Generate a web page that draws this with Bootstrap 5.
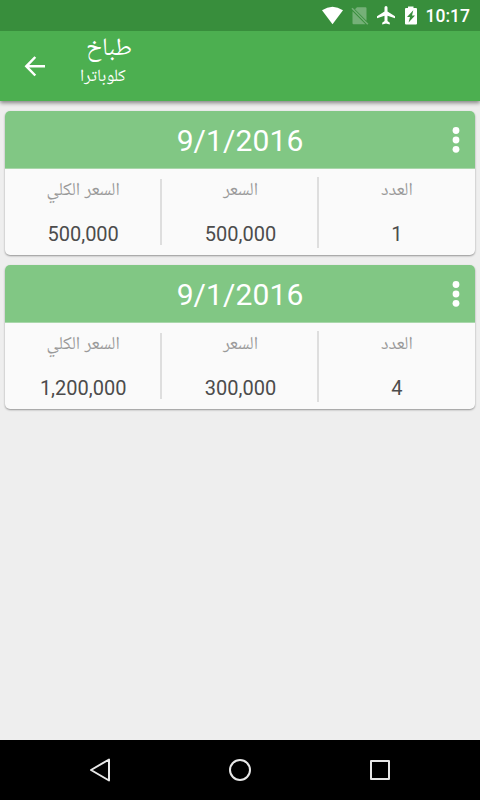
<!DOCTYPE html>
<html lang="ar">
<head>
<meta charset="utf-8">
<meta name="viewport" content="width=device-width, initial-scale=1">
<title>طباخ</title>
<link rel="stylesheet" href="https://cdn.jsdelivr.net/npm/bootstrap@5.3.0/dist/css/bootstrap.min.css">
<style>
body { font-family: Roboto, "Noto Naskh Arabic", "Noto Sans Arabic", "DejaVu Sans", sans-serif; background: #eee; height: 800px; }
svg { display: block; flex: none; }
.status-bar { height: 31px; background: #388e3c; padding-right: 10px; z-index: 1; }
.status-icons { height: 32px; }
.clock { font-size: 17.5px; font-weight: 500; line-height: 32px; margin-left: 7px; }
.app-bar { height: 70px; background: #4caf50; box-shadow: 0 2px 4px rgba(0,0,0,.45); }
.back { padding-left: 23px; width: 80px; }
.app-title { font-size: 25px; line-height: 31px; padding-left: 6px; }
.app-sub { font-size: 17.3px; line-height: 26px; }
.orders { padding: 10px 5px; gap: 10px; }
.order { height: 144px; border-radius: 5px; background: #fafafa; box-shadow: 0 1px 2px rgba(0,0,0,.38); }
.order-head { height: 58px; background: #81c784; border-bottom: 1px solid #a9d7ab; }
.order-date { font-size: 30px; line-height: 58px; padding-top: 1px; letter-spacing: .1px; }
.order-menu { right: 13px; top: 14px; }
.cell { height: 86px; }
.cell-label { font-size: 18.2px; line-height: 24px; color: #999; padding-top: 8px; height: 47px; }
.cell-value { font-size: 20px; line-height: 36px; color: #4c4c4c; }
.rule { width: 2px; background: #dedede; flex: none; }
.rule-a { height: 66px; margin-top: 10px; margin-left: -1px; }
.rule-b { height: 71px; margin-top: 8px; margin-left: -2px; }
.nav-keys { height: 60px; padding: 0 88px; }
</style>
<script src="https://cdn.jsdelivr.net/npm/bootstrap@5.3.0/dist/js/bootstrap.bundle.min.js"></script>
</head>
<body class="d-flex flex-column overflow-hidden m-0">
<header class="text-white">
  <div class="status-bar position-relative d-flex justify-content-end">
    <svg class="status-icons" width="98" height="32" viewBox="0 0 98 32">
      <path fill="#fff" d="M1 10.200Q11.500 3.200 22 10.200L11.500 24.200Z"/>
      <path fill="#75b078" d="M36 7.200H44.500Q45.500 7.200 45.500 8.200V20.800L34 9.300ZM31.500 11.200L44.500 24.200H32.500Q31.500 24.200 31.500 23.200Z"/>
      <path stroke="#75b078" stroke-width="1.600" d="M31 8.300L46.800 24.300"/>
      <path fill="#fff" d="M74 18.200V16.200L66.500 11.400V7.600A1.500 1.500 0 0 0 63.500 7.600V11.400L56 16.200V18.200L63.500 15.800V21.100L61.200 22.700V24.500L65 23.500L68.800 24.500V22.700L66.500 21.100V15.800Z"/>
      <path fill="#fff" d="M87 6.400H92.500V8H95Q96 8 96 9V23.500Q96 24.500 95 24.500H85Q84 24.500 84 23.500V9Q84 8 85 8H87Z"/>
      <path fill="#388e3c" d="M92.300 10.200L86 17H89L87.600 22.500L94 15.500H91Z"/>
    </svg>
    <span class="clock">10:17</span>
  </div>
  <div class="app-bar d-flex">
    <div class="back d-flex align-items-center">
      <svg width="24" height="24" viewBox="0 0 24 24" fill="none" stroke="#fff" stroke-width="2.500"><path d="M22 12.300H3.500M12.300 3L3.300 12.300L12.300 21.500"/></svg>
    </div>
    <div>
      <div class="app-title"><bdi>طباخ</bdi></div>
      <div class="app-sub"><bdi>كلوباترا</bdi></div>
    </div>
  </div>
</header>
<main class="orders d-flex flex-column flex-grow-1">
  <section class="order overflow-hidden">
    <div class="order-head position-relative text-center text-white">
      <div class="order-date">9/1/2016</div>
      <svg class="order-menu position-absolute" width="12" height="30" viewBox="0 0 12 30" fill="#fff"><circle cx="6" cy="5.500" r="3.400"/><circle cx="6" cy="15" r="3.400"/><circle cx="6" cy="24.300" r="3.400"/></svg>
    </div>
    <div class="d-flex text-center">
      <div class="cell col"><div class="cell-label">السعر الكلي</div><div class="cell-value">500,000</div></div>
      <div class="rule rule-a"></div>
      <div class="cell col"><div class="cell-label">السعر</div><div class="cell-value">500,000</div></div>
      <div class="rule rule-b"></div>
      <div class="cell col"><div class="cell-label">العدد</div><div class="cell-value">1</div></div>
    </div>
  </section>
  <section class="order overflow-hidden">
    <div class="order-head position-relative text-center text-white">
      <div class="order-date">9/1/2016</div>
      <svg class="order-menu position-absolute" width="12" height="30" viewBox="0 0 12 30" fill="#fff"><circle cx="6" cy="5.500" r="3.400"/><circle cx="6" cy="15" r="3.400"/><circle cx="6" cy="24.300" r="3.400"/></svg>
    </div>
    <div class="d-flex text-center">
      <div class="cell col"><div class="cell-label">السعر الكلي</div><div class="cell-value">1,200,000</div></div>
      <div class="rule rule-a"></div>
      <div class="cell col"><div class="cell-label">السعر</div><div class="cell-value">300,000</div></div>
      <div class="rule rule-b"></div>
      <div class="cell col"><div class="cell-label">العدد</div><div class="cell-value">4</div></div>
    </div>
  </section>
</main>
<footer class="nav-keys bg-black d-flex align-items-center justify-content-between">
  <svg width="24" height="24" viewBox="0 0 24 24" fill="none" stroke="#e8e8e8" stroke-width="2" stroke-linejoin="round"><path d="M21 1.500V22.500L3 12Z"/></svg>
  <svg width="24" height="24" viewBox="0 0 24 24" fill="none" stroke="#e8e8e8" stroke-width="2"><circle cx="12" cy="12" r="10"/></svg>
  <svg width="24" height="24" viewBox="0 0 24 24" fill="none" stroke="#e8e8e8" stroke-width="2" stroke-linejoin="round"><path d="M3 3H21V21H3Z"/></svg>
</footer>
</body>
</html>
